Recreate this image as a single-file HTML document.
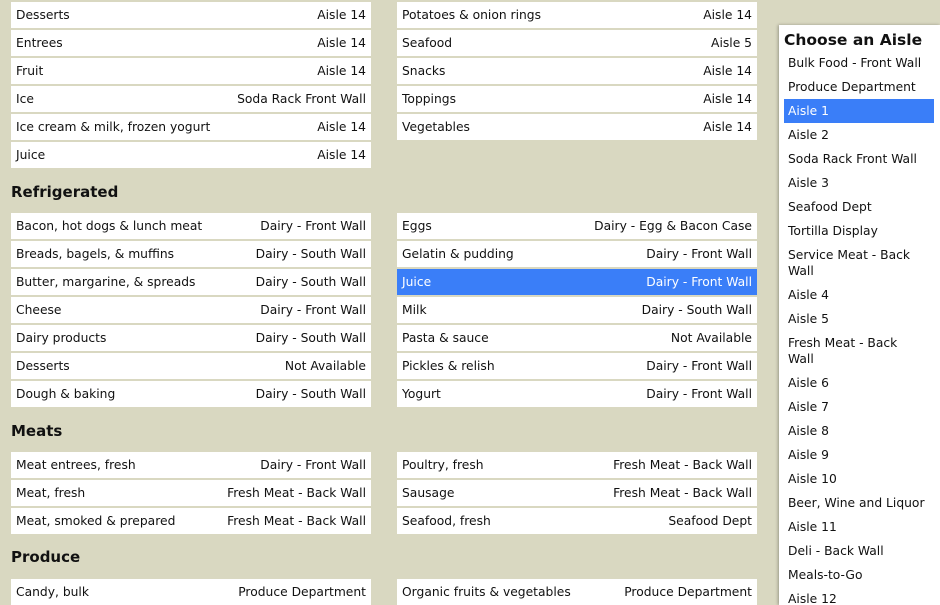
<!DOCTYPE html>
<html><head><meta charset="utf-8"><style>
html,body{margin:0;width:940px;height:605px;overflow:hidden}
body{background:#d9d8c1;font-family:"DejaVu Sans","Liberation Sans",sans-serif;font-size:12.3px;color:#111;position:relative}
.r{position:absolute;width:350px;height:26px;line-height:26px;background:#fff;padding:0 5px}
.r span{float:right}
.L{left:11px}.R{left:397px}
.s{background:#3a7ef8;color:#fff}
h2{position:absolute;left:11px;margin:0;font-size:15px;font-weight:bold;color:#111}
#p{position:absolute;left:779px;top:25px;width:161px;height:580px;background:#fff;box-shadow:-1px 0 3px rgba(0,0,0,.3)}
#p h3{margin:0;position:absolute;left:5px;top:6px;font-size:15.5px}
#p ul{list-style:none;margin:0;padding:0;position:absolute;left:5px;top:26px;width:150px}
#p li{padding:4px 4px;line-height:16px;white-space:nowrap}
</style></head><body>
<div class="r L" style="top:2px">Desserts<span>Aisle 14</span></div>
<div class="r L" style="top:30px">Entrees<span>Aisle 14</span></div>
<div class="r L" style="top:58px">Fruit<span>Aisle 14</span></div>
<div class="r L" style="top:86px">Ice<span>Soda Rack Front Wall</span></div>
<div class="r L" style="top:114px">Ice cream &amp; milk, frozen yogurt<span>Aisle 14</span></div>
<div class="r L" style="top:142px">Juice<span>Aisle 14</span></div>
<div class="r R" style="top:2px">Potatoes &amp; onion rings<span>Aisle 14</span></div>
<div class="r R" style="top:30px">Seafood<span>Aisle 5</span></div>
<div class="r R" style="top:58px">Snacks<span>Aisle 14</span></div>
<div class="r R" style="top:86px">Toppings<span>Aisle 14</span></div>
<div class="r R" style="top:114px">Vegetables<span>Aisle 14</span></div>
<h2 style="top:183px">Refrigerated</h2>
<div class="r L" style="top:213px">Bacon, hot dogs &amp; lunch meat<span>Dairy - Front Wall</span></div>
<div class="r L" style="top:241px">Breads, bagels, &amp; muffins<span>Dairy - South Wall</span></div>
<div class="r L" style="top:269px">Butter, margarine, &amp; spreads<span>Dairy - South Wall</span></div>
<div class="r L" style="top:297px">Cheese<span>Dairy - Front Wall</span></div>
<div class="r L" style="top:325px">Dairy products<span>Dairy - South Wall</span></div>
<div class="r L" style="top:353px">Desserts<span>Not Available</span></div>
<div class="r L" style="top:381px">Dough &amp; baking<span>Dairy - South Wall</span></div>
<div class="r R" style="top:213px">Eggs<span>Dairy - Egg &amp; Bacon Case</span></div>
<div class="r R" style="top:241px">Gelatin &amp; pudding<span>Dairy - Front Wall</span></div>
<div class="r R s" style="top:269px">Juice<span>Dairy - Front Wall</span></div>
<div class="r R" style="top:297px">Milk<span>Dairy - South Wall</span></div>
<div class="r R" style="top:325px">Pasta &amp; sauce<span>Not Available</span></div>
<div class="r R" style="top:353px">Pickles &amp; relish<span>Dairy - Front Wall</span></div>
<div class="r R" style="top:381px">Yogurt<span>Dairy - Front Wall</span></div>
<h2 style="top:422px">Meats</h2>
<div class="r L" style="top:452px">Meat entrees, fresh<span>Dairy - Front Wall</span></div>
<div class="r L" style="top:480px">Meat, fresh<span>Fresh Meat - Back Wall</span></div>
<div class="r L" style="top:508px">Meat, smoked &amp; prepared<span>Fresh Meat - Back Wall</span></div>
<div class="r R" style="top:452px">Poultry, fresh<span>Fresh Meat - Back Wall</span></div>
<div class="r R" style="top:480px">Sausage<span>Fresh Meat - Back Wall</span></div>
<div class="r R" style="top:508px">Seafood, fresh<span>Seafood Dept</span></div>
<h2 style="top:548px">Produce</h2>
<div class="r L" style="top:579px">Candy, bulk<span>Produce Department</span></div>
<div class="r R" style="top:579px">Organic fruits &amp; vegetables<span>Produce Department</span></div>
<div id="p"><h3>Choose an Aisle</h3><ul>
<li>Bulk Food - Front Wall</li><li>Produce Department</li><li class="s">Aisle 1</li><li>Aisle 2</li><li>Soda Rack Front Wall</li><li>Aisle 3</li><li>Seafood Dept</li><li>Tortilla Display</li><li>Service Meat - Back<br>Wall</li><li>Aisle 4</li><li>Aisle 5</li><li>Fresh Meat - Back<br>Wall</li><li>Aisle 6</li><li>Aisle 7</li><li>Aisle 8</li><li>Aisle 9</li><li>Aisle 10</li><li>Beer, Wine and Liquor</li><li>Aisle 11</li><li>Deli - Back Wall</li><li>Meals-to-Go</li><li>Aisle 12</li>
</ul></div>
</body></html>
